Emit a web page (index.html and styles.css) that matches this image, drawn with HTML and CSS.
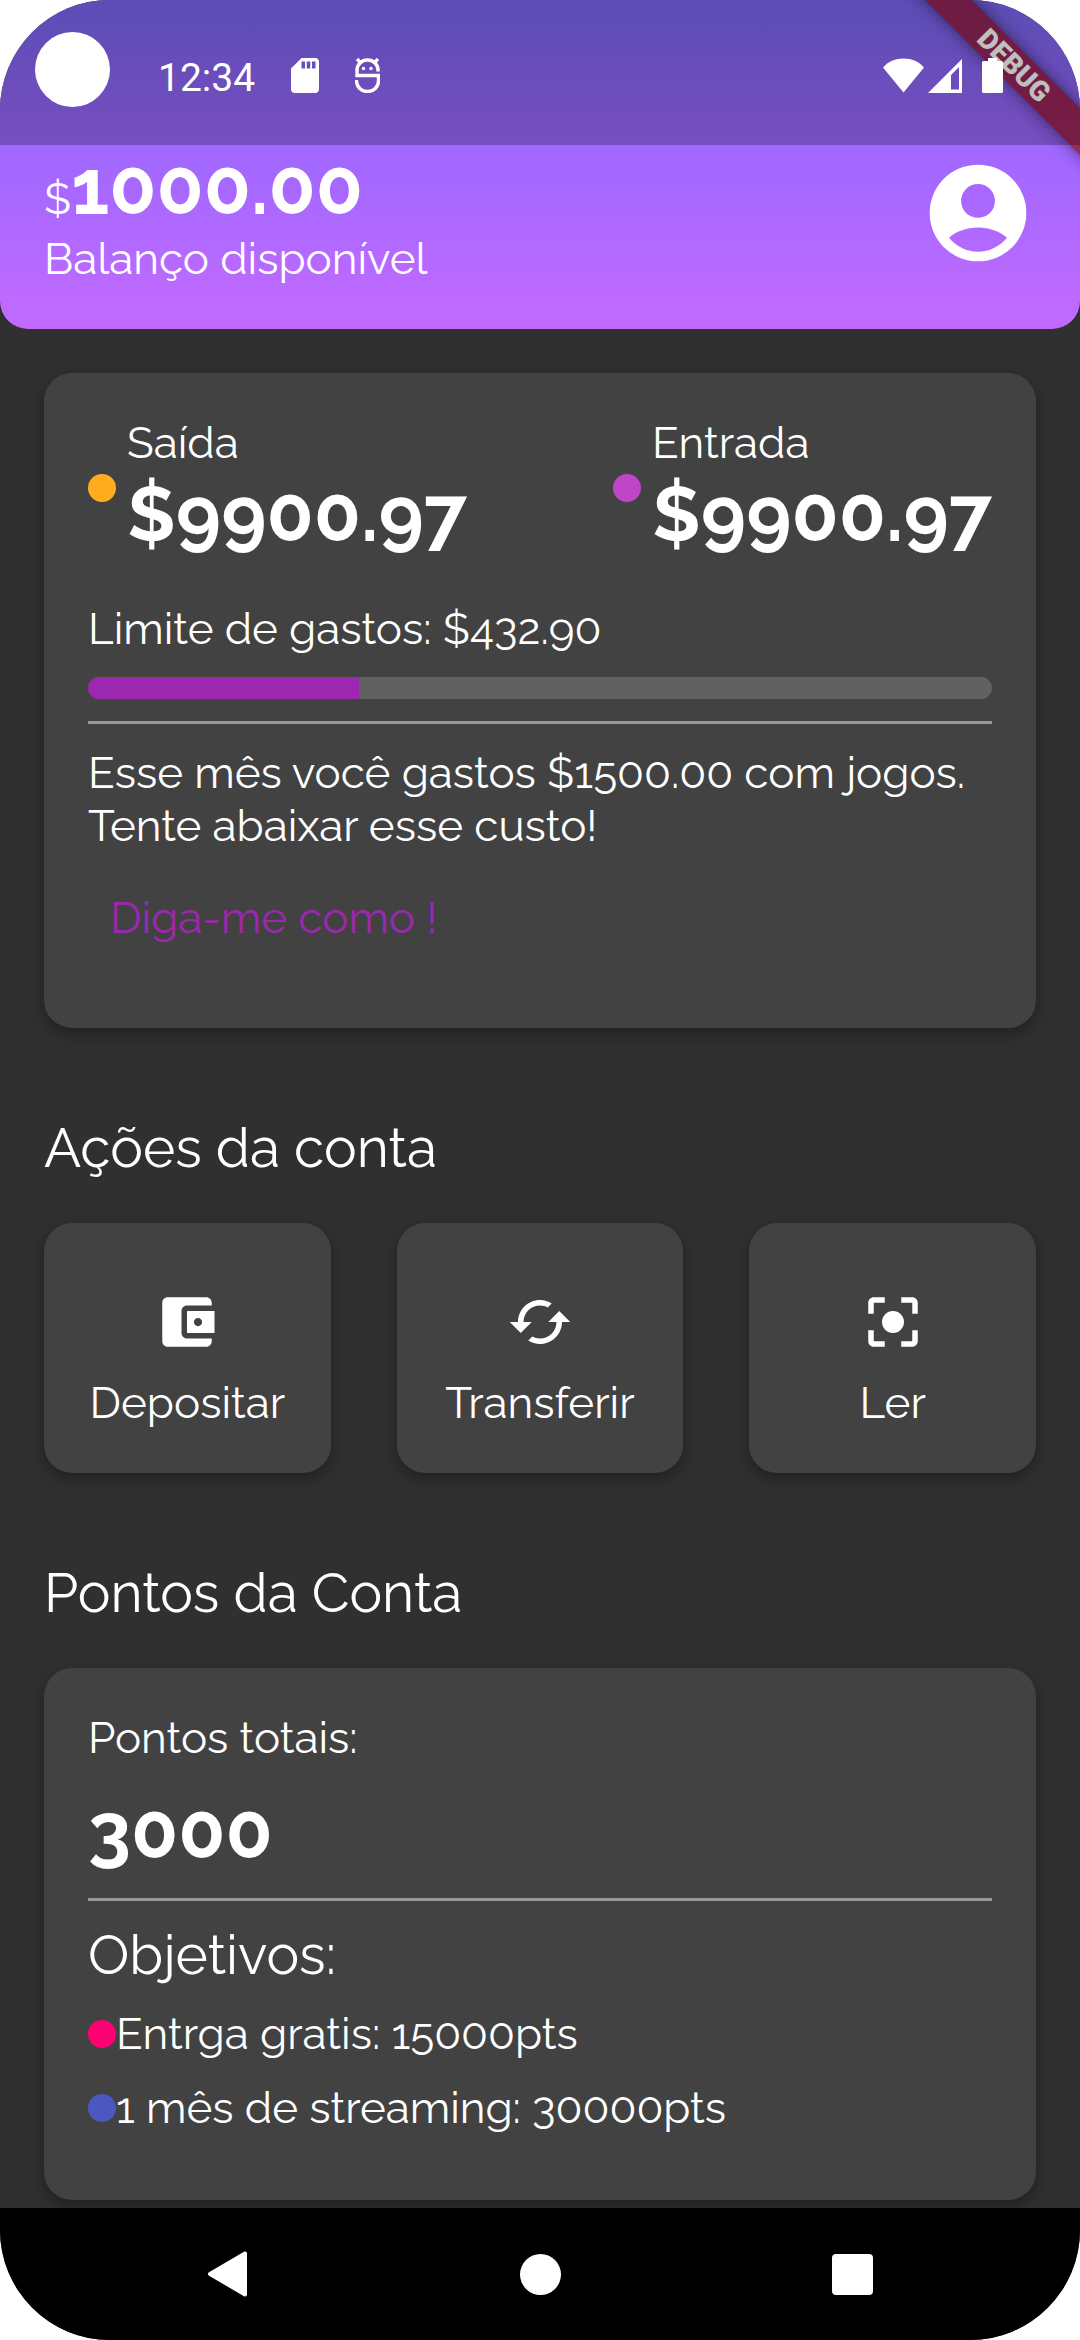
FILE: index.html
```html
<!DOCTYPE html>
<html lang="pt-BR">
<head>
  <meta charset="utf-8">
  <meta name="viewport" content="width=device-width, initial-scale=1">
  <title>Conta</title>
  <link rel="stylesheet" href="styles.css">
</head>
<body>
  <div class="device">
    <header class="header">
      <div class="debug-banner">DEBUG</div>
      <div class="status-bar">
        <span class="camera"></span>
        <div class="status-group status-left">
          <time class="clock">12:34</time>
          <svg width="28" height="35" viewBox="4 2 16 20" aria-hidden="true"><path fill="currentColor" d="M18 2h-8L4 8v12c0 1.100.9 2 2 2h12c1.100 0 2-.9 2-2V4c0-1.100-.9-2-2-2zm-6 6h-2V4h2zm3 0h-2V4h2zm3 0h-2V4h2z"/></svg>
          <svg width="25" height="35" viewBox="0 0 25 35" aria-hidden="true">
            <path fill="none" stroke="currentColor" stroke-width="3.400" d="M23 13.500V12A10.500 10 0 0 0 2 12V17.500H23.500V23A11 10.500 0 0 1 1.500 23V22M2 1l4 4M23 1l-4 4"/>
            <circle cx="8.500" cy="10.500" r="1.700" fill="currentColor"/><circle cx="16" cy="10.500" r="1.700" fill="currentColor"/>
          </svg>
        </div>
        <div class="status-group status-right">
          <svg width="41" height="35" viewBox="0 0 41 35" aria-hidden="true"><path fill="currentColor" d="M20.500 34.500 0 9.500C5 3.500 12.500.5 20.500.5S36 3.500 41 9.500z"/></svg>
          <svg width="34" height="35" viewBox="0 0 34 35" aria-hidden="true"><path fill="currentColor" fill-rule="evenodd" d="M34 1v34H0zM31 9l-8 8v14.500h8z"/></svg>
          <svg class="battery" width="21" height="35" viewBox="0 0 21 35" aria-hidden="true"><path fill="currentColor" d="M6 0h9v3h4.500Q21 3 21 4.500v29Q21 35 19.500 35h-18Q0 35 0 33.500v-29Q0 3 1.500 3H6z"/></svg>
        </div>
      </div>
      <div class="balance">
        <div>
          <p class="balance-value"><span class="currency">$</span>1000.00</p>
          <p>Balanço disponível</p>
        </div>
        <button class="account" type="button" aria-label="Perfil">
          <svg width="116" height="116" viewBox="0 0 24 24" aria-hidden="true"><path fill="currentColor" fill-rule="evenodd" d="M12 2a10 10 0 1 0 0 20 10 10 0 0 0 0-20zm0 4a3.500 3.500 0 1 1 0 7 3.500 3.500 0 0 1 0-7zm0 14c-2.350 0-4.450-1.080-6-2.900 1.600-1.350 3.700-2.100 6-2.100s4.400.75 6 2.100C16.450 18.920 14.350 20 12 20z"/></svg>
        </button>
      </div>
    </header>

    <main class="content">
      <section class="card summary">
        <div class="flows">
          <div class="flow">
            <span class="dot dot-out"></span>
            <div><p>Saída</p><p class="amount">$9900.97</p></div>
          </div>
          <div class="flow">
            <span class="dot dot-in"></span>
            <div><p>Entrada</p><p class="amount">$9900.97</p></div>
          </div>
        </div>
        <label for="limit">Limite de gastos: $432.90</label>
        <progress class="limit-bar" id="limit" value="30" max="100"></progress>
        <hr class="divider">
        <p class="tip">Esse mês você gastos $1500.00 com jogos. Tente abaixar esse custo!</p>
        <button class="text-button" type="button">Diga-me como !</button>
      </section>

      <section class="section">
        <h2 class="title">Ações da conta</h2>
        <div class="actions">
          <button class="card action" type="button">
            <svg width="66" height="66" viewBox="0 0 24 24" aria-hidden="true"><path fill="currentColor" d="M21 18v1c0 1.100-.9 2-2 2H5c-1.110 0-2-.9-2-2V5c0-1.100.89-2 2-2h14c1.100 0 2 .9 2 2v1h-9c-1.110 0-2 .9-2 2v8c0 1.100.89 2 2 2h9zm-9-2h10V8H12v8zm4-2.500c-.83 0-1.500-.67-1.500-1.500s.67-1.500 1.500-1.500 1.500.67 1.500 1.500-.67 1.500-1.500 1.500z"/></svg>
            <span>Depositar</span>
          </button>
          <button class="card action" type="button">
            <svg width="66" height="66" viewBox="0 0 24 24" aria-hidden="true"><path fill="currentColor" d="m19 8-4 4h3c0 3.310-2.690 6-6 6-1.010 0-1.970-.25-2.800-.7l-1.460 1.460C8.970 19.540 10.430 20 12 20c4.420 0 8-3.580 8-8h3l-4-4zM6 12c0-3.310 2.690-6 6-6 1.010 0 1.970.25 2.800.7l1.460-1.460C15.030 4.460 13.570 4 12 4c-4.420 0-8 3.580-8 8H1l4 4 4-4H6z"/></svg>
            <span>Transferir</span>
          </button>
          <button class="card action" type="button">
            <svg width="66" height="66" viewBox="0 0 24 24" aria-hidden="true"><path fill="currentColor" d="M5 15H3v4c0 1.100.9 2 2 2h4v-2H5v-4zM5 5h4V3H5c-1.100 0-2 .9-2 2v4h2V5zm14-2h-4v2h4v4h2V5c0-1.100-.9-2-2-2zm0 16h-4v2h4c1.100 0 2-.9 2-2v-4h-2v4zM12 8a4 4 0 1 0 0 8 4 4 0 0 0 0-8z"/></svg>
            <span>Ler</span>
          </button>
        </div>
      </section>

      <section class="section">
        <h2 class="title">Pontos da Conta</h2>
        <div class="card points">
          <p>Pontos totais:</p>
          <p class="amount points-total">3000</p>
          <hr class="divider">
          <h3 class="subtitle">Objetivos:</h3>
          <ul class="goals">
            <li class="goal"><span class="dot dot-delivery"></span>Entrga gratis: 15000pts</li>
            <li class="goal"><span class="dot dot-streaming"></span>1 mês de streaming: 30000pts</li>
          </ul>
        </div>
      </section>
    </main>

    <nav class="system-nav">
      <button class="nav-button" type="button" aria-label="Voltar"><svg width="44" height="46" viewBox="0 0 44 46" aria-hidden="true"><path fill="currentColor" stroke="currentColor" stroke-width="4" stroke-linejoin="round" d="M4 23 39 2.500v41z"/></svg></button>
      <button class="nav-button" type="button" aria-label="Início"><svg width="41" height="41" viewBox="0 0 41 41" aria-hidden="true"><circle cx="20.500" cy="20.500" r="20.500" fill="currentColor"/></svg></button>
      <button class="nav-button" type="button" aria-label="Recentes"><svg width="41" height="41" viewBox="0 0 41 41" aria-hidden="true"><rect width="41" height="41" rx="4" fill="currentColor"/></svg></button>
    </nav>
  </div>
</body>
</html>
```
FILE: styles.css
```css
* {
  box-sizing: border-box;
}

body {
  margin: 0;
  background: #fff;
  color: #fff;
  font-family: Raleway, Lato, sans-serif;
  font-size: 44px;
  line-height: 52px;
}

p,
h2,
h3,
ul {
  margin: 0;
  padding: 0;
}

button {
  padding: 0;
  border: 0;
  background: none;
  color: inherit;
  font: inherit;
}

svg {
  display: block;
}

.device {
  position: relative;
  display: flex;
  flex-direction: column;
  min-height: 100vh;
  overflow: hidden;
  border-radius: 110px;
  background: #303030;
}

/* Header and system status bar */

.header {
  position: relative;
  border-radius: 0 0 28px 28px;
  background: linear-gradient(#7b67f4, #9f68ff 44%, #c36aff);
}

.debug-banner {
  position: absolute;
  top: 49px;
  right: -64px;
  width: 260px;
  height: 33px;
  background: rgba(160, 0, 0, 0.63);
  box-shadow: 0 0 16px rgba(0, 0, 0, 0.5);
  font: 900 28px/33px Roboto, sans-serif;
  text-align: center;
  transform: rotate(45deg);
}

.status-bar {
  position: relative;
  display: flex;
  align-items: center;
  justify-content: space-between;
  height: 145px;
  padding: 6px 77px 0 158px;
  background: rgba(0, 0, 0, 0.25);
}

.camera {
  position: absolute;
  top: 32px;
  left: 35px;
  width: 75px;
  height: 75px;
  border-radius: 50%;
  background: #fff;
}

.status-group {
  display: flex;
  align-items: center;
}

.status-left {
  gap: 36px;
}

.status-right {
  gap: 4px;
}

.battery {
  margin-left: 16px;
}

.clock {
  padding-top: 4px;
  font-family: Roboto, sans-serif;
  font-size: 39px;
}

.balance {
  display: flex;
  align-items: center;
  justify-content: space-between;
  padding: 0 44px 44px;
}

.balance-value {
  margin-bottom: 4px;
  font-size: 77px;
  font-weight: 700;
  line-height: 84px;
}

.currency {
  font-size: 44px;
  font-weight: 400;
  line-height: 44px;
}

.account {
  margin-bottom: 4px;
}

/* Page content */

.content {
  flex: 1;
  padding: 44px 44px 6px;
}

.card {
  padding: 44px;
  border-radius: 28px;
  background: #424242;
  box-shadow: 0 6px 16px rgba(0, 0, 0, 0.35);
}

.section {
  margin-top: 88px;
}

.title,
.subtitle {
  font-size: 55px;
  font-weight: 400;
  line-height: 63px;
}

.title {
  margin-bottom: 44px;
}

.amount {
  font-size: 77px;
  font-weight: 700;
  line-height: 90px;
}

.dot {
  flex: none;
  width: 28px;
  height: 28px;
  border-radius: 50%;
}

.dot-out {
  background: #ffad1f;
}

.dot-in {
  background: #bf44c8;
}

.dot-delivery {
  background: #ff0072;
}

.dot-streaming {
  background: #4b58c0;
}

.divider {
  width: 100%;
  height: 3px;
  margin: 22px 0;
  border: 0;
  background: #999;
}

/* Spending summary */

.summary {
  display: flex;
  flex-direction: column;
}

.flows {
  display: flex;
  justify-content: space-between;
  margin-bottom: 44px;
}

.flow {
  display: flex;
  align-items: center;
  gap: 11px;
}

.limit-bar {
  appearance: none;
  width: 100%;
  height: 22px;
  margin-top: 22px;
  overflow: hidden;
  border: 0;
  border-radius: 11px;
  background: #616161;
}

.limit-bar::-webkit-progress-bar {
  background: #616161;
}

.limit-bar::-webkit-progress-value {
  background: #9c27b0;
}

.limit-bar::-moz-progress-bar {
  background: #9c27b0;
}

.tip {
  line-height: 53px;
}

.text-button {
  align-self: flex-start;
  height: 132px;
  padding: 0 22px;
  color: #9c27b0;
}

/* Account actions */

.actions {
  display: grid;
  grid-template-columns: repeat(3, 1fr);
  gap: 66px;
}

.action {
  display: flex;
  flex-direction: column;
  align-items: center;
  gap: 22px;
  padding: 66px 22px 44px;
}

/* Account points */

.points-total {
  margin-top: 22px;
}

.goals {
  list-style: none;
}

.goal {
  display: flex;
  align-items: center;
  margin: 22px 0;
}

/* System navigation */

.system-nav {
  display: flex;
  justify-content: center;
  gap: 180px;
  height: 132px;
  background: #000;
}

.nav-button {
  display: flex;
  align-items: center;
  justify-content: center;
  width: 132px;
}
```
